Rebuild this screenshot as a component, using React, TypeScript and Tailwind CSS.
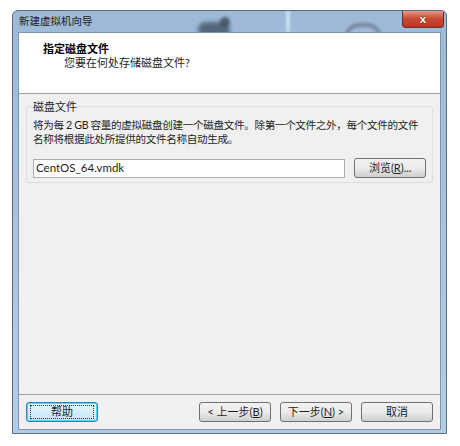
import React from "react";

const font = { fontFamily: 'Lato, "Noto Sans CJK SC", sans-serif' };

function WinButton({ children, focused = false }: { children: React.ReactNode; focused?: boolean }) {
  return (
    <div
      className={`flex h-[20px] w-[72px] items-center justify-center rounded-[3px] border text-[11px] text-[#1e1e1e] ${
        focused
          ? "border-[#3c7fb1] bg-gradient-to-b from-[#eaf6fd] to-[#bee6fd] shadow-[inset_0_0_0_1px_#48d8fb]"
          : "border-[#707070] bg-gradient-to-b from-[#f2f2f2] via-[#ebebeb] to-[#cfcfcf]"
      }`}
    >
      {focused ? (
        <div className="flex h-[14px] w-[64px] items-center justify-center border border-dotted border-[#333]">
          {children}
        </div>
      ) : (
        children
      )}
    </div>
  );
}

export default function App() {
  return (
    <div className="h-[446px] w-[460px] overflow-hidden bg-white pl-[12px] pt-[10px]" style={font}>
      <div className="flex h-[424px] w-[435px] flex-col overflow-hidden rounded-t-[6px] border border-[#5b6d80] bg-gradient-to-b from-[#9db9d7] to-[#b4cde6] px-[5px] pb-[3px]">
        {/* title bar */}
        <div className="relative flex h-[21px] shrink-0 items-center">
          {/* desktop seen through the glass */}
          <div className="absolute left-[268px] top-0 h-[21px] w-[4px] bg-[#c8def5] blur-[1px]" />
          <div className="absolute left-[180px] top-[11px] h-[16px] w-[32px] rounded-full bg-[#3c4b5c] opacity-75 blur-[2px]" />
          <div className="absolute left-[202px] top-[6px] h-[10px] w-[10px] rounded-full bg-[#3c4b5c] opacity-80 blur-[1.5px]" />
          <div className="absolute left-[326px] top-[12px] h-[30px] w-[38px] rounded-full border-[4px] border-[#4b5664] opacity-50 blur-[1.5px]" />
          <span className="relative pl-[1px] text-[10.5px] text-[#1c1c1c]">新建虚拟机向导</span>
          <div className="absolute right-[-3px] top-[-1px] flex h-[18px] w-[42px] items-center justify-center rounded-b-[4px] border border-t-0 border-[#6e2a24] bg-gradient-to-b from-[#e8a190] via-[#c94b36] to-[#c2321d]">
            <span className="text-[12px] font-bold leading-none text-white [text-shadow:0_0_2px_#5a1a10]">x</span>
          </div>
        </div>

        {/* client */}
        <div className="relative flex flex-1 flex-col border border-[#7e95ad] bg-[#f0f0f0]">
          <div className="h-[61px] shrink-0 border-b border-[#a0a0a0] bg-white pl-[24px] pt-[9px]">
            <div className="text-[11px] font-bold leading-[14px] text-black">指定磁盘文件</div>
            <div className="pl-[21px] text-[11px] leading-[14px] text-[#1e1e1e]">您要在何处存储磁盘文件?</div>
          </div>

          <div className="flex-1 px-[7px] pt-[12px]">
            <div className="relative h-[77px] rounded-[3px] border border-[#d5dfe5] px-[6px] pt-[11px]">
              <span className="absolute left-[5px] top-[-7px] bg-[#f0f0f0] px-[1px] text-[11px] leading-[13px] text-[#1e1e1e]">
                磁盘文件
              </span>
              <p className="whitespace-nowrap text-[10.6px] leading-[14px] tracking-[-0.35px] text-[#1e1e1e]">
                将为每 2 GB 容量的虚拟磁盘创建一个磁盘文件。除第一个文件之外，每个文件的文件
                <br />
                名称将根据此处所提供的文件名称自动生成。
              </p>
              <div className="mt-[12px] flex items-center gap-[9px]">
                <div className="flex h-[19px] w-[314px] items-center border border-[#abadb3] bg-white pl-[2px] text-[11.5px] text-[#1e1e1e]">
                  CentOS_64.vmdk
                </div>
                <WinButton>
                  浏览(<span className="underline">R</span>)...
                </WinButton>
              </div>
            </div>
          </div>

          <div className="flex h-[35px] shrink-0 items-center border-t border-[#a0a0a0] px-[7px]">
            <WinButton focused>帮助</WinButton>
            <div className="ml-auto flex gap-[9px]">
              <WinButton>
                &lt; 上一步(<span className="underline">B</span>)
              </WinButton>
              <WinButton>
                下一步(<span className="underline">N</span>) &gt;
              </WinButton>
              <WinButton>取消</WinButton>
            </div>
          </div>
        </div>
      </div>
    </div>
  );
}
